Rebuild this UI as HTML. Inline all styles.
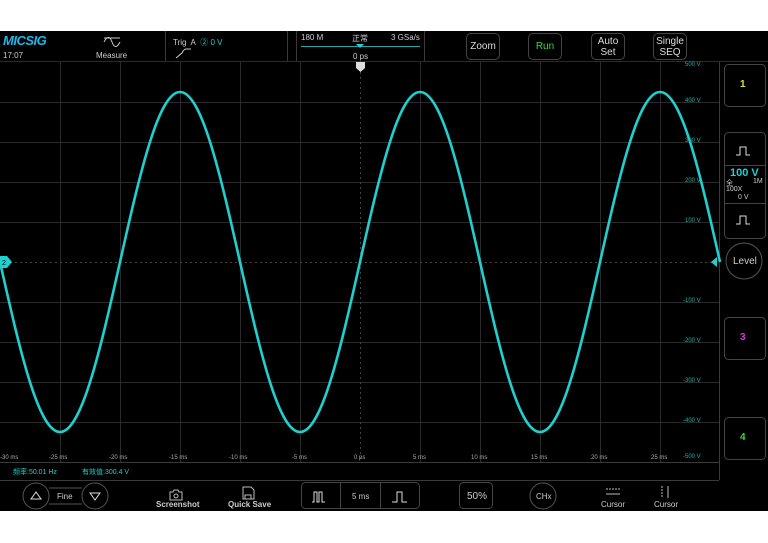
<!DOCTYPE html>
<html><head><meta charset="utf-8"><style>
body{margin:0;width:768px;height:543px;background:#fff;overflow:hidden;font-family:"Liberation Sans","Noto Sans CJK SC",sans-serif;}
#s{position:absolute;left:0;top:31px;width:768px;height:480px;background:#000;}
.t{position:absolute;color:#ccc;font-size:8px;white-space:nowrap;}
.btn{position:absolute;border:1px solid #444;border-radius:5px;color:#ddd;font-size:10px;text-align:center;box-sizing:border-box;}
</style></head><body>
<div id="s"></div>
<svg width="768" height="543" style="position:absolute;left:0;top:0">
<g stroke="#2a2a2a" stroke-width="1">
<line x1="0" y1="61.5" x2="768" y2="61.5"/>
<line x1="60.5" y1="62" x2="60.5" y2="462"/><line x1="120.5" y1="62" x2="120.5" y2="462"/><line x1="180.5" y1="62" x2="180.5" y2="462"/><line x1="240.5" y1="62" x2="240.5" y2="462"/><line x1="300.5" y1="62" x2="300.5" y2="462"/><line x1="420.5" y1="62" x2="420.5" y2="462"/><line x1="480.5" y1="62" x2="480.5" y2="462"/><line x1="540.5" y1="62" x2="540.5" y2="462"/><line x1="600.5" y1="62" x2="600.5" y2="462"/><line x1="660.5" y1="62" x2="660.5" y2="462"/>
<line x1="0" y1="102.5" x2="719" y2="102.5"/><line x1="0" y1="142.5" x2="719" y2="142.5"/><line x1="0" y1="182.5" x2="719" y2="182.5"/><line x1="0" y1="222.5" x2="719" y2="222.5"/><line x1="0" y1="302.5" x2="719" y2="302.5"/><line x1="0" y1="342.5" x2="719" y2="342.5"/><line x1="0" y1="382.5" x2="719" y2="382.5"/><line x1="0" y1="422.5" x2="719" y2="422.5"/>
</g>
<g stroke="#444" stroke-width="1" stroke-dasharray="2,3">
<line x1="0" y1="262.5" x2="719" y2="262.5"/><line x1="360.5" y1="62" x2="360.5" y2="462"/>
</g>
<g stroke="#3a3a3a" stroke-width="1" fill="none">
<line x1="719.5" y1="62" x2="719.5" y2="480"/>
<line x1="0" y1="462.5" x2="719" y2="462.5"/>
<line x1="0" y1="480.5" x2="719" y2="480.5"/>
<line x1="165.5" y1="31" x2="165.5" y2="61"/><line x1="287.5" y1="31" x2="287.5" y2="61"/><line x1="296.5" y1="31" x2="296.5" y2="61"/><line x1="424.5" y1="31" x2="424.5" y2="61"/>
</g>
<path d="M0,262 C19.57,349.1 38.29,432 60,432 C81.71,432 100.43,349.1 120,262 C139.57,174.9 158.29,92 180,92 C201.71,92 220.43,174.9 240,262 C259.57,349.1 278.29,432 300,432 C321.71,432 340.43,349.1 360,262 C379.57,174.9 398.29,92 420,92 C441.71,92 460.43,174.9 480,262 C499.57,349.1 518.29,432 540,432 C561.71,432 580.43,349.1 600,262 C619.57,174.9 638.29,92 660,92 C681.71,92 700.43,174.9 720,262" stroke="#1fd0d0" stroke-width="2.6" fill="none"/>
<path d="M0,256 h7 l5,6 l-5,6 h-7z" fill="#1fd0d0"/>
<text x="2" y="265" font-size="7" fill="#000" font-family="Liberation Sans">2</text>
<path d="M711,262 l6,-5 v10z" fill="#1fd0d0"/>
<path d="M356,62 h9 v6 l-4.5,4 l-4.5,-4z" fill="#ddd"/>
<line x1="301" y1="46.5" x2="420" y2="46.5" stroke="#1fa8a8"/>
<path d="M356,44 h8 l-4,4z" fill="#1fd0d0"/>
<!-- measure icon -->
<path d="M104,38 h16 M104,42 c3,-6 6,-6 8,0 c2,6 5,6 8,0" stroke="#ccc" fill="none" stroke-width="1"/>
<path d="M176,58 l6,-5 q2,-4 4,-4 h5" stroke="#ccc" fill="none"/>
<circle cx="716" cy="262" r="0"/>
<!-- bottom buttons -->
<circle cx="36" cy="496" r="13" stroke="#555" fill="none"/><circle cx="95" cy="496" r="13" stroke="#555" fill="none"/>
<path d="M49,488 h33 M49,504 h33" stroke="#555"/>
<path d="M31,499 l5,-7 l5,7z M90,493 l5,7 l5,-7z" stroke="#ddd" fill="none"/>
<path d="M170,492 h3 l1,-2 h4 l1,2 h3 v8 h-12z" stroke="#bbb" fill="none"/><circle cx="176" cy="496" r="2" stroke="#bbb" fill="none"/>
<path d="M243,487 h8 l3,3 v9 h-11z M245,499 v-4 h6 v4" stroke="#bbb" fill="none"/>
<rect x="301.5" y="482.5" width="118" height="26" rx="4" stroke="#444" fill="none"/>
<line x1="340.5" y1="483" x2="340.5" y2="508" stroke="#444"/><line x1="380.5" y1="483" x2="380.5" y2="508" stroke="#444"/>
<path d="M312,502 h2 v-10 h3 v10 h2 v-10 h3 v10 h3" stroke="#ddd" fill="none"/>
<path d="M392,502 h5 v-10 h5 v10 h5" stroke="#ddd" fill="none"/>
<rect x="459.5" y="482.5" width="33" height="26" rx="4" stroke="#444" fill="none"/>
<circle cx="543" cy="496" r="13" stroke="#555" fill="none"/>
<path d="M606,489 h14" stroke="#bbb" stroke-dasharray="2,1"/><path d="M606,494 h14" stroke="#bbb"/>
<path d="M662,486 v12" stroke="#bbb" stroke-dasharray="2,1"/><path d="M668,486 v12" stroke="#bbb"/>
<!-- right panel -->
<g stroke="#444" fill="none">
<rect x="724.5" y="64.5" width="41" height="42" rx="4"/>
<rect x="724.5" y="132.5" width="41" height="106" rx="4"/>
<circle cx="744" cy="261" r="18" stroke="#555"/>
<rect x="724.5" y="317.5" width="41" height="42" rx="4"/>
<rect x="724.5" y="417.5" width="41" height="42" rx="4"/>
<line x1="725" y1="165.5" x2="765" y2="165.5"/><line x1="725" y1="203.5" x2="765" y2="203.5"/>
</g>
<path d="M736,155 h4 v-8 h6 v8 h4 M736,224 h4 v-8 h6 v8 h4" stroke="#ddd" fill="none"/>
</svg>
<div class="t" style="left:3px;top:33px;color:#1fb8e8;font-size:13px;font-weight:bold;font-style:italic;letter-spacing:-0.5px">MICSIG</div>
<div class="t" style="left:3px;top:51px;font-size:8px">17:07</div>
<div class="t" style="left:96px;top:51px">Measure</div>
<div class="t" style="left:173px;top:37px">Trig&nbsp; A&nbsp; <span style="color:#1fd0d0">② 0 V</span></div>
<div class="t" style="left:301px;top:33px">180 M</div>
<div class="t" style="left:352px;top:33px">正常</div>
<div class="t" style="left:391px;top:33px">3 GSa/s</div>
<div class="t" style="left:353px;top:52px">0 ps</div>
<div class="btn" style="left:466px;top:33px;width:34px;height:27px;line-height:25px">Zoom</div>
<div class="btn" style="left:528px;top:33px;width:34px;height:27px;line-height:25px;color:#3d3">Run</div>
<div class="btn" style="left:591px;top:33px;width:34px;height:27px;line-height:11px;padding-top:2px">Auto<br>Set</div>
<div class="btn" style="left:653px;top:33px;width:34px;height:27px;line-height:11px;padding-top:2px">Single<br>SEQ</div>
<div class="t" style="left:685px;top:62px;color:#1fb0b0;font-size:6px">500 V</div>
<div class="t" style="left:685px;top:98px;color:#1fb0b0;font-size:6px">400 V</div>
<div class="t" style="left:685px;top:138px;color:#1fb0b0;font-size:6px">300 V</div>
<div class="t" style="left:685px;top:178px;color:#1fb0b0;font-size:6px">200 V</div>
<div class="t" style="left:685px;top:218px;color:#1fb0b0;font-size:6px">100 V</div>
<div class="t" style="left:683px;top:298px;color:#1fb0b0;font-size:6px">-100 V</div>
<div class="t" style="left:683px;top:338px;color:#1fb0b0;font-size:6px">-200 V</div>
<div class="t" style="left:683px;top:378px;color:#1fb0b0;font-size:6px">-300 V</div>
<div class="t" style="left:683px;top:418px;color:#1fb0b0;font-size:6px">-400 V</div>
<div class="t" style="left:683px;top:454px;color:#1fb0b0;font-size:6px">-500 V</div>
<div class="t" style="left:0;top:455px;font-size:6px;color:#aaa">-30 ms</div>
<div class="t" style="left:49px;top:455px;font-size:6px;color:#aaa">-25 ms</div>
<div class="t" style="left:109px;top:455px;font-size:6px;color:#aaa">-20 ms</div>
<div class="t" style="left:169px;top:455px;font-size:6px;color:#aaa">-15 ms</div>
<div class="t" style="left:229px;top:455px;font-size:6px;color:#aaa">-10 ms</div>
<div class="t" style="left:292px;top:455px;font-size:6px;color:#aaa">-5 ms</div>
<div class="t" style="left:354px;top:455px;font-size:6px;color:#aaa">0 ps</div>
<div class="t" style="left:413px;top:455px;font-size:6px;color:#aaa">5 ms</div>
<div class="t" style="left:471px;top:455px;font-size:6px;color:#aaa">10 ms</div>
<div class="t" style="left:531px;top:455px;font-size:6px;color:#aaa">15 ms</div>
<div class="t" style="left:591px;top:455px;font-size:6px;color:#aaa">20 ms</div>
<div class="t" style="left:651px;top:455px;font-size:6px;color:#aaa">25 ms</div>
<div class="t" style="left:13px;top:467px;color:#1fd0d0;font-size:7px">频率:50.01 Hz</div>
<div class="t" style="left:82px;top:467px;color:#1fd0d0;font-size:7px">有效值:300.4 V</div>
<div class="t" style="left:57px;top:492px">Fine</div>
<div class="t" style="left:156px;top:500px;font-weight:bold">Screenshot</div>
<div class="t" style="left:228px;top:500px;font-weight:bold">Quick Save</div>
<div class="t" style="left:352px;top:492px">5 ms</div>
<div class="t" style="left:467px;top:491px;font-size:10px">50%</div>
<div class="t" style="left:536px;top:492px">CHx</div>
<div class="t" style="left:601px;top:500px">Cursor</div>
<div class="t" style="left:654px;top:500px">Cursor</div>
<div class="t" style="left:740px;top:79px;color:#dd3;font-size:10px;font-weight:bold">1</div>
<div class="t" style="left:730px;top:167px;color:#1fd0d0;font-size:11px;font-weight:bold">100 V</div>
<div class="t" style="left:726px;top:178px;font-size:7px">全</div>
<div class="t" style="left:753px;top:178px;font-size:7px">1M</div>
<div class="t" style="left:726px;top:186px;font-size:7px">100X</div>
<div class="t" style="left:738px;top:194px;font-size:7px">0 V</div>
<div class="t" style="left:733px;top:256px;font-size:10px">Level</div>
<div class="t" style="left:740px;top:332px;color:#d3d;font-size:10px;font-weight:bold">3</div>
<div class="t" style="left:740px;top:432px;color:#3d3;font-size:10px;font-weight:bold">4</div>
</body></html>
